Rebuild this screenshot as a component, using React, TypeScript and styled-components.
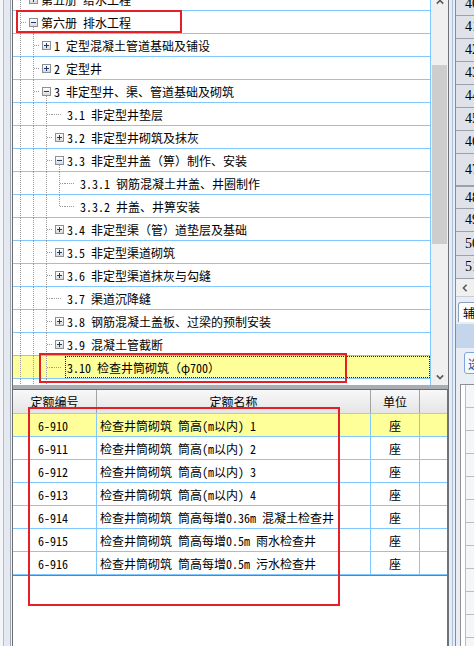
import React from "react";
import styled, { createGlobalStyle } from "styled-components";

const GRID = "#80c8ff";
const DOT = "#9a9a9a";
const COLS = "84px 274px 49px 80px";

const GlobalStyle = createGlobalStyle`
  html, body { margin: 0; padding: 0; background: #fff; overflow: hidden; }
  body {
    font-family: "Noto Sans Mono CJK SC", "Noto Sans CJK SC", "Liberation Mono", monospace;
    font-size: 12px;
    color: #000;
  }
  #root { width: 474px; height: 646px; overflow: hidden; }
`;

type TreeItem = {
  lv: number;
  conn?: "half";
  kind: "plus" | "minus" | "leaf";
  text: string;
  sel?: boolean;
};

const tree: TreeItem[] = [
  { lv: 1, kind: "plus", text: "第五册 给水工程" },
  { lv: 1, kind: "minus", text: "第六册 排水工程" },
  { lv: 2, kind: "plus", text: "1 定型混凝土管道基础及铺设" },
  { lv: 2, kind: "plus", text: "2 定型井" },
  { lv: 2, kind: "minus", text: "3 非定型井、渠、管道基础及砌筑" },
  { lv: 3, kind: "leaf", text: "3.1 非定型井垫层" },
  { lv: 3, kind: "plus", text: "3.2 非定型井砌筑及抹灰" },
  { lv: 3, kind: "minus", text: "3.3 非定型井盖（箅）制作、安装" },
  { lv: 4, kind: "leaf", text: "3.3.1 钢筋混凝土井盖、井圈制作" },
  { lv: 4, kind: "leaf", conn: "half", text: "3.3.2 井盖、井箅安装" },
  { lv: 3, kind: "plus", text: "3.4 非定型渠（管）道垫层及基础" },
  { lv: 3, kind: "plus", text: "3.5 非定型渠道砌筑" },
  { lv: 3, kind: "plus", text: "3.6 非定型渠道抹灰与勾缝" },
  { lv: 3, kind: "leaf", text: "3.7 渠道沉降缝" },
  { lv: 3, kind: "plus", text: "3.8 钢筋混凝土盖板、过梁的预制安装" },
  { lv: 3, kind: "plus", text: "3.9 混凝土管截断" },
  { lv: 3, kind: "leaf", sel: true, text: "3.10 检查井筒砌筑（φ700）" },
  { lv: 3, kind: "leaf", text: "3.11 检查井井室砌筑" },
];

const quotas = [
  { code: "6-910", name: "检查井筒砌筑 筒高(m以内) 1" },
  { code: "6-911", name: "检查井筒砌筑 筒高(m以内) 2" },
  { code: "6-912", name: "检查井筒砌筑 筒高(m以内) 3" },
  { code: "6-913", name: "检查井筒砌筑 筒高(m以内) 4" },
  { code: "6-914", name: "检查井筒砌筑 筒高每增0.36m 混凝土检查井" },
  { code: "6-915", name: "检查井筒砌筑 筒高每增0.5m 雨水检查井" },
  { code: "6-916", name: "检查井筒砌筑 筒高每增0.5m 污水检查井" },
];

const rowHeads = [
  { n: "40", h: 23 },
  { n: "41", h: 23 },
  { n: "42", h: 23 },
  { n: "43", h: 23 },
  { n: "44", h: 23 },
  { n: "45", h: 23 },
  { n: "46", h: 23 },
  { n: "47", h: 33, thick: true },
  { n: "48", h: 22 },
  { n: "49", h: 23 },
  { n: "50", h: 24 },
  { n: "51", h: 23 },
];

const Chevron: React.FC<{ dir: "up" | "down" | "left" }> = ({ dir }) => {
  const d =
    dir === "up" ? "M0.8 4.6 L4 1.4 L7.2 4.6" : dir === "down" ? "M0.8 1.4 L4 4.6 L7.2 1.4" : "M4.6 0.8 L1.4 4 L4.6 7.2";
  const w = dir === "left" ? 6 : 8;
  const h = dir === "left" ? 8 : 6;
  return (
    <svg width={w} height={h} viewBox={`0 0 ${w} ${h}`}>
      <path d={d} fill="none" stroke="#5a5a5a" strokeWidth="1.6" />
    </svg>
  );
};

const App: React.FC = () => {
  return (
    <>
      <GlobalStyle />
      <Window>
        <EdgeStrip />
        <Main>
          <TreePane>
            <TreeView>
              <TreeContent>
                {tree.map((it, i) => (
                  <TreeRow key={i} $selected={it.sel}>
                    {Array.from({ length: it.lv - 1 }).map((_, k) => (
                      <Guide key={k} $v="full" />
                    ))}
                    <Guide $v={it.conn === "half" ? "half" : "full"} $h />
                    <Twisty $leaf={it.kind === "leaf"} $open={it.kind === "minus"}>
                      {it.kind !== "leaf" && <Expander $open={it.kind === "minus"} />}
                    </Twisty>
                    <Label $selected={it.sel}>{it.text}</Label>
                  </TreeRow>
                ))}
              </TreeContent>
            </TreeView>
            <VScroll>
              <ScrollBtn>
                <Chevron dir="up" />
              </ScrollBtn>
              <ScrollTrack>
                <Thumb />
              </ScrollTrack>
              <ScrollBtn>
                <Chevron dir="down" />
              </ScrollBtn>
            </VScroll>
          </TreePane>
          <Splitter />
          <TablePane>
            <HeadRow>
              <HeadCell>定额编号</HeadCell>
              <HeadCell>定额名称</HeadCell>
              <HeadCell>单位</HeadCell>
              <HeadCell>单价</HeadCell>
            </HeadRow>
            <Body>
              {quotas.map((q, i) => (
                <BodyRow key={q.code} $hl={i === 0}>
                  <Cell $pad={25}>{q.code}</Cell>
                  <Cell $pad={3}>{q.name}</Cell>
                  <Cell $center>座</Cell>
                  <Cell />
                </BodyRow>
              ))}
            </Body>
          </TablePane>
        </Main>
        <SidePanel>
          <SideSash />
          <SideBody>
            {rowHeads.map((r) => (
              <RowHead key={r.n} $h={r.h} $thick={r.thick}>
                {r.n}
              </RowHead>
            ))}
            <HScroll>
              <Chevron dir="left" />
            </HScroll>
            <TabStrip>
              <Tab>辅助</Tab>
            </TabStrip>
            <BlueBand />
            <ButtonRow>
              <SmallButton>选择</SmallButton>
            </ButtonRow>
            <GridBox>
              {Array.from({ length: 12 }).map((_, i) => (
                <GridLine key={i} />
              ))}
            </GridBox>
          </SideBody>
        </SidePanel>

        <Mark $x={16} $y={17} $w={166} $h={23} />
        <Mark $x={39} $y={360} $w={308} $h={30} />
        <Mark $x={28} $y={414} $w={312} $h={199} />
      </Window>
    </>
  );
};

export default App;

const Window = styled.div`
  position: relative;
  display: flex;
  width: 474px;
  height: 653px;
  margin-top: -7px;
`;

const EdgeStrip = styled.div`
  flex: none;
  width: 13px;
  background: linear-gradient(
    to right,
    #f3f5f9 0 3px,
    #b3bcc7 3px 4px,
    #e4e9f1 4px 10px,
    #9ea7b2 10px 11px,
    #f0f3f7 11px 12px,
    #6b6f75 12px 13px
  );
`;

const Main = styled.div`
  flex: none;
  width: 435px;
  display: flex;
  flex-direction: column;
`;

/////////////////////////////////////

const TreePane = styled.div`
  flex: none;
  height: 392px;
  display: flex;
`;

const TreeView = styled.div`
  flex: 1;
  overflow: hidden;
  background: #fff;
  border-right: 1px solid ${GRID};
`;

const TreeContent = styled.div`
  margin-top: -5px;
`;

const TreeRow = styled.div<{ $selected?: boolean }>`
  display: flex;
  height: 23px;
  box-sizing: border-box;
  border-bottom: 1px solid ${GRID};
  background: ${(p) => (p.$selected ? "#ffff99" : "#fff")};
`;

const Guide = styled.span<{ $v?: "full" | "half"; $h?: boolean }>`
  position: relative;
  flex: none;
  width: 13px;
  &::before {
    content: "";
    display: ${(p) => (p.$v ? "block" : "none")};
    position: absolute;
    left: 7px;
    top: 0;
    height: ${(p) => (p.$v === "half" ? "11px" : "23px")};
    border-left: 1px dotted ${DOT};
  }
  &::after {
    content: "";
    display: ${(p) => (p.$h ? "block" : "none")};
    position: absolute;
    left: 8px;
    right: 0;
    top: 11px;
    border-top: 1px dotted ${DOT};
  }
`;

const Twisty = styled.span<{ $leaf?: boolean; $open?: boolean }>`
  position: relative;
  flex: none;
  width: 13px;
  box-sizing: border-box;
  padding-left: 3px;
  display: flex;
  align-items: center;
  &::before {
    content: "";
    display: ${(p) => (p.$leaf ? "block" : "none")};
    position: absolute;
    left: 0;
    width: 9px;
    top: 11px;
    border-top: 1px dotted ${DOT};
  }
  &::after {
    content: "";
    display: ${(p) => (p.$open ? "block" : "none")};
    position: absolute;
    left: 7px;
    top: 12px;
    height: 11px;
    border-left: 1px dotted ${DOT};
  }
`;

const Expander = styled.span<{ $open?: boolean }>`
  position: relative;
  z-index: 1;
  width: 9px;
  height: 9px;
  box-sizing: border-box;
  border: 1px solid #8e8f91;
  background: linear-gradient(#ffffff, #d9dadc);
  &::before {
    content: "";
    position: absolute;
    left: 1px;
    top: 3px;
    width: 5px;
    height: 1px;
    background: #1d3a73;
  }
  &::after {
    content: "";
    display: ${(p) => (p.$open ? "none" : "block")};
    position: absolute;
    left: 3px;
    top: 1px;
    width: 1px;
    height: 5px;
    background: #1d3a73;
  }
`;

const Label = styled.span<{ $selected?: boolean }>`
  flex: 1;
  display: flex;
  align-items: center;
  padding-left: 1px;
  border: 1px ${(p) => (p.$selected ? "dotted #222" : "solid transparent")};
  white-space: pre;
  overflow: hidden;
`;

const VScroll = styled.div`
  flex: none;
  width: 17px;
  display: flex;
  flex-direction: column;
  background: #f0f0f0;
`;

const ScrollBtn = styled.div`
  flex: none;
  height: 17px;
  display: flex;
  align-items: center;
  justify-content: center;
`;

const ScrollTrack = styled.div`
  flex: 1;
  padding-top: 55px;
`;

const Thumb = styled.div`
  height: 179px;
  margin: 0 1px;
  background: #cdcdcd;
`;

////////////////////////////////////

const Splitter = styled.div`
  flex: none;
  height: 4px;
  background: #a9adb3;
`;

const TablePane = styled.div`
  flex: 1;
  overflow: hidden;
  background: #fff;
  border-right: 1px solid #6f7276;
`;

const HeadRow = styled.div`
  display: grid;
  grid-template-columns: ${COLS};
  height: 25px;
  box-sizing: border-box;
  border-top: 1px solid #6a6d72;
  border-bottom: 1px solid #c4c4c4;
  background: linear-gradient(#f8f8f8, #e5e5e5);
`;

const HeadCell = styled.div`
  border-right: 1px solid #a3a3a3;
  display: flex;
  align-items: center;
  justify-content: center;
  white-space: nowrap;
`;

const Body = styled.div`
  border-bottom: 1px solid #7a7d82;
`;

const BodyRow = styled.div<{ $hl?: boolean }>`
  display: grid;
  grid-template-columns: ${COLS};
  height: 23px;
  box-sizing: border-box;
  border-bottom: 1px solid ${GRID};
  background: ${(p) => (p.$hl ? "#ffff99" : "#fff")};
  &:last-child {
    border-bottom-color: ${GRID};
  }
`;

const Cell = styled.div<{ $pad?: number; $center?: boolean }>`
  border-right: 1px solid ${GRID};
  display: flex;
  align-items: center;
  justify-content: ${(p) => (p.$center ? "center" : "flex-start")};
  padding-left: ${(p) => p.$pad ?? 0}px;
  white-space: pre;
  overflow: hidden;
`;

//////////////////////////////////

const SidePanel = styled.div`
  flex: none;
  width: 26px;
  display: flex;
`;

const SideSash = styled.div`
  flex: none;
  width: 8px;
  background: linear-gradient(
    to right,
    #6f7378 0 1px,
    #e8edf4 1px 4px,
    #a9c1de 4px 5px,
    #e8edf4 5px 7px,
    #858d97 7px 8px
  );
`;

const SideBody = styled.div`
  flex: 1;
  min-width: 0;
  display: flex;
  flex-direction: column;
  background: #e9eef5;
  overflow: hidden;
`;

const RowHead = styled.div<{ $h: number; $thick?: boolean }>`
  flex: none;
  height: ${(p) => p.$h}px;
  box-sizing: border-box;
  border-bottom: ${(p) => (p.$thick ? 2 : 1)}px solid #9aa1a9;
  background: #dfe3e9;
  padding-left: 9px;
  display: flex;
  align-items: center;
  font-family: "Liberation Serif", serif;
  font-size: 14px;
  white-space: nowrap;
`;

const HScroll = styled.div`
  flex: none;
  height: 18px;
  box-sizing: border-box;
  border-bottom: 1px solid #c9ced6;
  background: #f0f0f0;
  padding-left: 6px;
  display: flex;
  align-items: center;
`;

const TabStrip = styled.div`
  flex: none;
  height: 27px;
  padding: 5px 0 0 2px;
  box-sizing: border-box;
  display: flex;
`;

const Tab = styled.div`
  padding: 0 4px;
  height: 20px;
  box-sizing: border-box;
  border: 1px solid #8b9db8;
  border-bottom: none;
  border-radius: 3px 3px 0 0;
  background: #fff;
  display: flex;
  align-items: center;
  white-space: nowrap;
`;

const BlueBand = styled.div`
  flex: none;
  height: 24px;
  background: #c5d6ec;
`;

const ButtonRow = styled.div`
  flex: none;
  height: 32px;
  padding: 4px 0 0 8px;
  box-sizing: border-box;
  display: flex;
`;

const SmallButton = styled.div`
  height: 22px;
  padding: 0 3px;
  box-sizing: border-box;
  border: 1px solid #7fa5d8;
  border-radius: 3px;
  background: #f4f8fd;
  color: #1f4f9a;
  display: flex;
  align-items: center;
  white-space: nowrap;
`;

const GridBox = styled.div`
  flex: 1;
  margin: 4px 0 0 4px;
  border-left: 1px solid #8a8f96;
  border-top: 1px solid #8a8f96;
  background: #fff;
`;

const GridLine = styled.div`
  height: 23px;
  box-sizing: border-box;
  margin-left: 4px;
  border-left: 1px solid #b8bec6;
  border-bottom: 1px solid #b8bec6;
  background: #f5f6f8;
`;

const Mark = styled.div<{ $x: number; $y: number; $w: number; $h: number }>`
  position: absolute;
  left: ${(p) => p.$x}px;
  top: ${(p) => p.$y}px;
  width: ${(p) => p.$w}px;
  height: ${(p) => p.$h}px;
  box-sizing: border-box;
  border: 2px solid #e61e25;
  pointer-events: none;
`;
